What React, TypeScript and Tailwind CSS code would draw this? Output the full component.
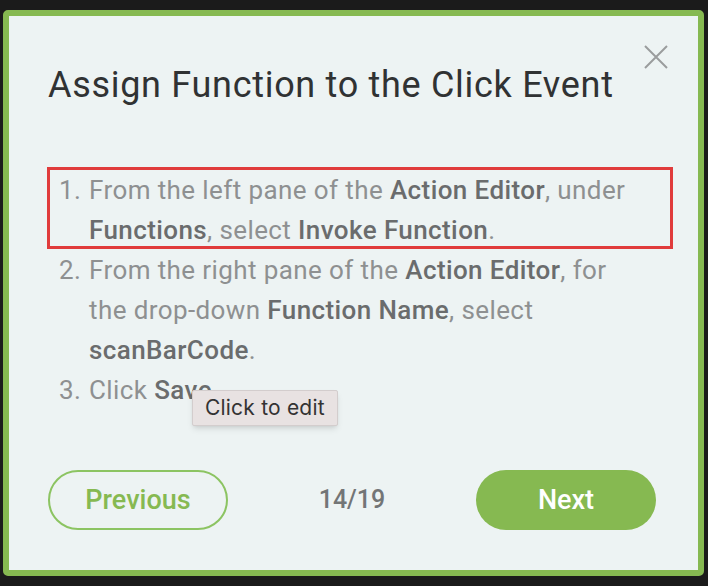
const B = ({ children }: { children: React.ReactNode }) => (
  <b className="font-medium text-[#6a6c6d]">{children}</b>
);

const steps = [
  {
    n: '1.',
    boxed: true,
    body: (
      <>
        From the left pane of the <B>Action Editor</B>, under <B>Functions</B>, select{' '}
        <B>Invoke Function</B>.
      </>
    ),
  },
  {
    n: '2.',
    boxed: false,
    body: (
      <>
        From the right pane of the <B>Action Editor</B>, for the drop&#8209;down{' '}
        <B>Function Name</B>, select <B>scanBarCode</B>.
      </>
    ),
  },
  {
    n: '3.',
    boxed: false,
    body: (
      <>
        Click <B>Save</B>.
      </>
    ),
  },
];

const App = () => {
  return (
    <div className="h-[586px] w-[708px] bg-[#1b1b1b] pt-[10px] pl-[3px] pr-[4px] pb-[10px] font-['Roboto',sans-serif]">
      <div className="relative flex h-full flex-col rounded-[5px] border-[6px] border-[#86b951] bg-[#edf3f3]">
        <button className="absolute right-[30px] top-[29px] text-[#9a9c9d]">
          <svg width="24" height="24" viewBox="0 0 24 24" stroke="currentColor" strokeWidth="2">
            <path d="M1 1 23 23M23 1 1 23" />
          </svg>
        </button>

        <h1 className="mt-[47px] pl-[39px] text-[36px] leading-[44px] tracking-[0.7px] text-[#303233]">
          Assign Function to the Click Event
        </h1>

        <ol className="mt-[63px] flex flex-col text-[26px] leading-[40px] tracking-[0.4px] text-[#8e9091]">
          {steps.map((s) => (
            <li key={s.n} className="relative ml-[41px] mr-[28px] flex pl-[9px]">
              {s.boxed && (
                <div className="absolute -left-[3px] -right-[3px] -top-[3px] bottom-[1px] border-[3px] border-[#e03b3b]" />
              )}
              <span className="w-[30px] shrink-0">{s.n}</span>
              <span className="max-w-[558px]">{s.body}</span>
            </li>
          ))}
        </ol>

        <div className="absolute left-[183px] top-[374px] rounded-[2px] border border-[#d3cdcd] bg-[#e8e2e2] px-[12px] py-[4px] font-['Inter',sans-serif] text-[21px] leading-[26px] tracking-[0.2px] text-[#333] shadow-md">
          Click to edit
        </div>

        <div className="mt-auto mb-[40px] flex items-center justify-between pl-[39px] pr-[42px]">
          <button className="h-[60px] w-[180px] rounded-full border-2 border-[#8cc462] text-[27px] font-medium text-[#86b951]">
            Previous
          </button>
          <span className="text-[25px] font-medium text-[#737576]">14/19</span>
          <button className="h-[60px] w-[180px] rounded-full bg-[#86b951] text-[27px] font-medium text-white">
            Next
          </button>
        </div>
      </div>
    </div>
  );
};

export default App;
